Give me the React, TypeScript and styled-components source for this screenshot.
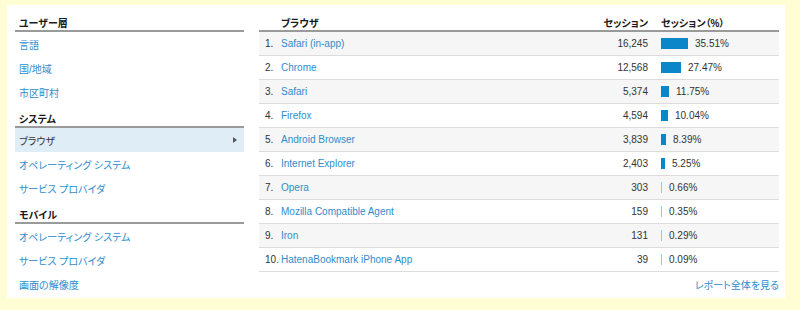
import React from "react";
import styled, { createGlobalStyle } from "styled-components";

const GlobalStyle = createGlobalStyle`
  body {
    margin: 0;
    background: #fefdd3;
    font-family: "Liberation Sans", Arial, "Noto Sans CJK JP", sans-serif;
    font-size: 10px;
    color: #333;
    font-feature-settings: "palt";
  }
`;

const Panel = styled.div`
  box-sizing: border-box;
  margin: 5px 0 0 7px;
  width: 778px;
  height: 293px;
  padding: 3px 6px 0 8px;
  background: #fff;
  display: flex;
  gap: 15px;
`;

const Sidebar = styled.nav`
  flex: 0 0 229px;
  display: flex;
  flex-direction: column;
`;

const SectionTitle = styled.div`
  box-sizing: border-box;
  height: 24px;
  padding: 6px 4px 0;
  display: flex;
  align-items: center;
  border-bottom: 2px solid #9a9a9a;
  font-weight: bold;
  color: #1a1a1a;
`;

const NavItem = styled.a<{ $active?: boolean }>`
  height: 24px;
  padding: 0 7px 0 4px;
  display: flex;
  align-items: center;
  color: ${(p) => (p.$active ? "#333" : "#2f8ccb")};
  background: ${(p) => (p.$active ? "#deedf6" : "transparent")};
  text-decoration: none;
  cursor: pointer;

  &::after {
    content: "";
    display: ${(p) => (p.$active ? "block" : "none")};
    margin-left: auto;
    border-left: 4px solid #555;
    border-top: 3px solid transparent;
    border-bottom: 3px solid transparent;
  }
`;

const Table = styled.div`
  flex: 0 0 520px;
  display: flex;
  flex-direction: column;
`;

const columns = "22px 287px 80px 118px";

const HeadRow = styled.div`
  box-sizing: border-box;
  height: 24px;
  padding-top: 6px;
  display: grid;
  grid-template-columns: ${columns};
  align-items: center;
  border-bottom: 2px solid #9a9a9a;
  font-weight: bold;
  color: #1a1a1a;
`;

const Row = styled.div<{ $shaded: boolean }>`
  height: 23px;
  display: grid;
  grid-template-columns: ${columns};
  align-items: center;
  border-bottom: 1px solid #dcdcdc;
  background: ${(p) => (p.$shaded ? "#f6f6f6" : "#fff")};
`;

const Rank = styled.span`
  padding-left: 6px;
  color: #333;
`;

const NameLink = styled.a`
  color: #2f8ccb;
  text-decoration: none;
`;

const Num = styled.span`
  text-align: right;
`;

const PctCell = styled.span`
  padding-left: 13px;
  display: flex;
  align-items: center;
  gap: 7px;
`;

const Bar = styled.span<{ $thin: boolean }>`
  height: 11px;
  background: ${(p) => (p.$thin ? "#8fcbe7" : "#0b87c9")};
`;

const Footer = styled.div`
  height: 24px;
  display: flex;
  align-items: center;
  justify-content: flex-end;
`;

const rows = [
  { name: "Safari (in-app)", sessions: "16,245", pct: "35.51%", bar: 27 },
  { name: "Chrome", sessions: "12,568", pct: "27.47%", bar: 20 },
  { name: "Safari", sessions: "5,374", pct: "11.75%", bar: 8 },
  { name: "Firefox", sessions: "4,594", pct: "10.04%", bar: 7 },
  { name: "Android Browser", sessions: "3,839", pct: "8.39%", bar: 5 },
  { name: "Internet Explorer", sessions: "2,403", pct: "5.25%", bar: 4 },
  { name: "Opera", sessions: "303", pct: "0.66%", bar: 1 },
  { name: "Mozilla Compatible Agent", sessions: "159", pct: "0.35%", bar: 1 },
  { name: "Iron", sessions: "131", pct: "0.29%", bar: 1 },
  { name: "HatenaBookmark iPhone App", sessions: "39", pct: "0.09%", bar: 1 },
];

export default function App() {
  return (
    <>
      <GlobalStyle />
      <Panel>
        <Sidebar>
          <SectionTitle>ユーザー層</SectionTitle>
          <NavItem>言語</NavItem>
          <NavItem>国/地域</NavItem>
          <NavItem>市区町村</NavItem>
          <SectionTitle>システム</SectionTitle>
          <NavItem $active>ブラウザ</NavItem>
          <NavItem>オペレーティング システム</NavItem>
          <NavItem>サービス プロバイダ</NavItem>
          <SectionTitle>モバイル</SectionTitle>
          <NavItem>オペレーティング システム</NavItem>
          <NavItem>サービス プロバイダ</NavItem>
          <NavItem>画面の解像度</NavItem>
        </Sidebar>
        <Table>
          <HeadRow>
            <span />
            <span>ブラウザ</span>
            <Num>セッション</Num>
            <PctCell>セッション（%）</PctCell>
          </HeadRow>
          {rows.map((r, i) => (
            <Row key={r.name} $shaded={i % 2 === 0}>
              <Rank>{i + 1}.</Rank>
              <NameLink>{r.name}</NameLink>
              <Num>{r.sessions}</Num>
              <PctCell>
                <Bar $thin={r.bar < 2} style={{ width: r.bar }} />
                {r.pct}
              </PctCell>
            </Row>
          ))}
          <Footer>
            <NameLink>レポート全体を見る</NameLink>
          </Footer>
        </Table>
      </Panel>
    </>
  );
}
